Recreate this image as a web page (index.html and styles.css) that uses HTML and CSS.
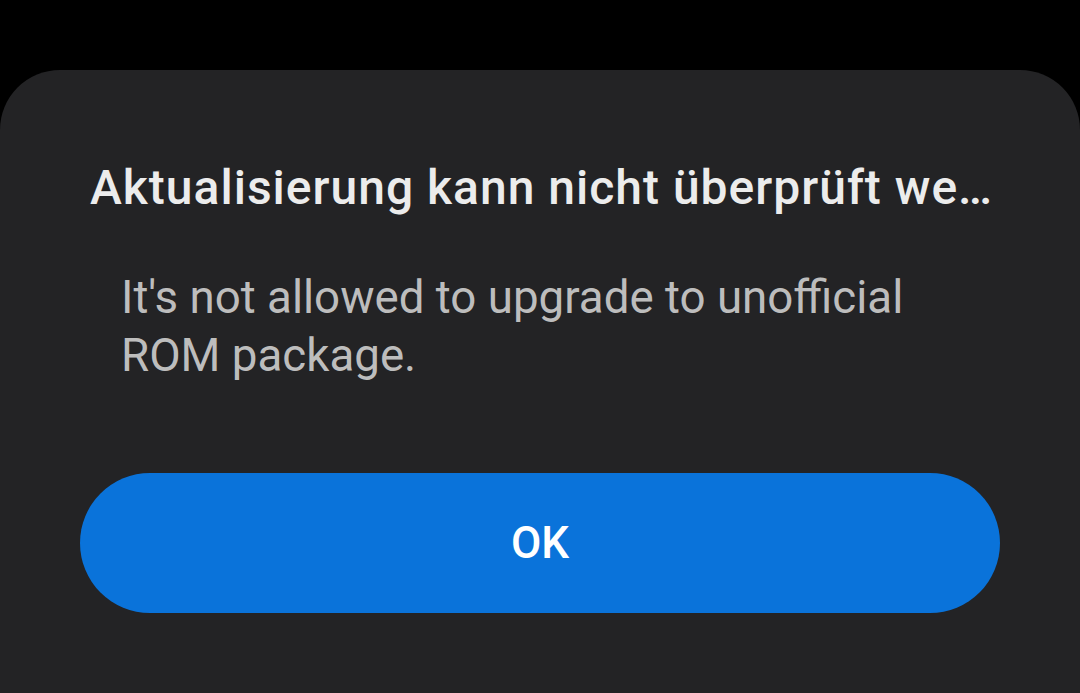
FILE: index.html
```html
<!DOCTYPE html>
<html>
<head>
<meta charset="utf-8">
<link rel="stylesheet" href="styles.css">
</head>
<body>
<div class="dialog">
  <h1 class="title">Aktualisierung kann nicht überprüft we…</h1>
  <p class="message">It's not allowed to upgrade to unofficial ROM package.</p>
  <button class="ok">OK</button>
</div>
</body>
</html>
```
FILE: styles.css
```css
html, body {
  margin: 0;
  padding: 0;
  background: #000;
  height: 100%;
  overflow: hidden;
}
body {
  font-family: Roboto, "Noto Sans", sans-serif;
  padding-top: 70px;
  box-sizing: border-box;
}
.dialog {
  background: #232325;
  border-radius: 60px 60px 0 0;
  height: 623px;
  padding: 0 80px;
  display: flex;
  flex-direction: column;
}
.title {
  margin: 92px 0 0 10px;
  font-size: 48px;
  font-weight: 500;
  letter-spacing: 1px;
  color: #ececec;
  white-space: nowrap;
  line-height: 52px;
}
.message {
  margin: 55px 0 0 41px;
  width: 800px;
  font-size: 45.7px;
  line-height: 58px;
  color: #bdbdbd;
}
.ok {
  margin-top: 88px;
  width: 920px;
  height: 140px;
  border: none;
  border-radius: 70px;
  background: #0a73da;
  color: #fff;
  font-family: Roboto, "Noto Sans", sans-serif;
  font-size: 44px;
  font-weight: 500;
}
```
